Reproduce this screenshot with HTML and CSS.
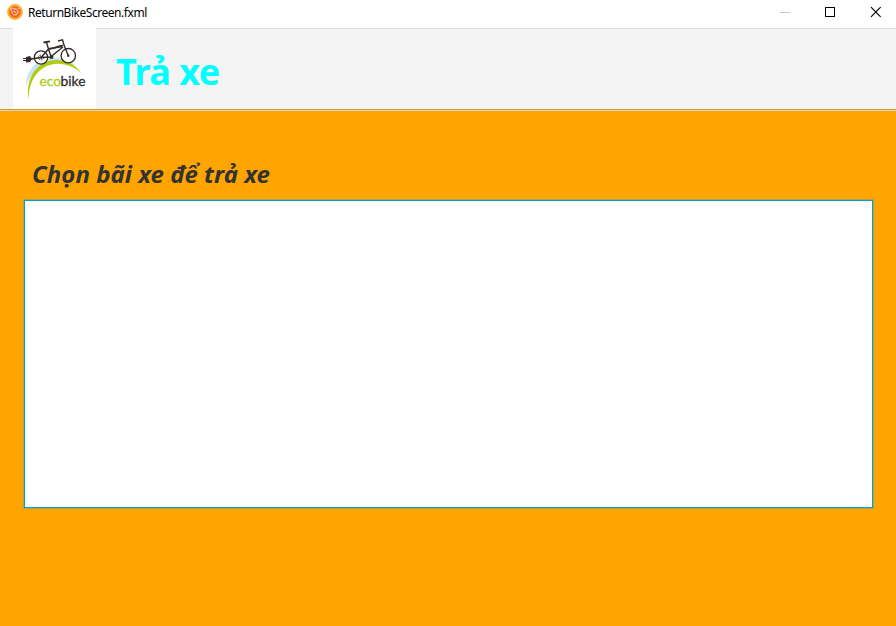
FILE: index.html
```html
<!DOCTYPE html>
<html lang="vi">
<head>
<meta charset="utf-8">
<title>ReturnBikeScreen.fxml</title>
<link rel="stylesheet" href="styles.css">
</head>
<body>
<div class="window">
  <div class="titlebar">
    <svg class="app-icon" width="16" height="16" viewBox="0 0 16 16">
      <circle cx="8" cy="8" r="7.900" fill="#fbb02d"/>
      <circle cx="8" cy="8" r="5.800" fill="#f4641e"/>
      <g fill="none" stroke="#ffe0c4" stroke-width="1"><path d="M3.500 4.500C5 3.500 6 5 8 5C10.500 5 11 6.500 11 8C11 10 9.500 11 8 11C6 11 5 9.500 5 8C5 6.500 4 6 3.500 4.500Z"/><path d="M6.500 7L9.500 9M11 4.500l1.500-.5"/></g>
    </svg>
    <span class="caption">ReturnBikeScreen.fxml</span>
    <div class="controls">
      <svg width="45" height="28" viewBox="0 0 45 28" shape-rendering="crispEdges"><path d="M19 12.500h10" stroke="#c6c6c6"/></svg>
      <svg width="45" height="28" viewBox="0 0 45 28" shape-rendering="crispEdges"><rect x="19.500" y="7.500" width="9" height="9" fill="none" stroke="#000"/></svg>
      <svg width="45" height="28" viewBox="0 0 45 28"><path d="M20 7.200l9.600 9.600M29.600 7.200L20 16.800" stroke="#000" stroke-width="1.150"/></svg>
    </div>
  </div>
  <header class="header">
    <svg class="logo" width="83" height="81" viewBox="13 28 83 81">
      <path d="M26.500 86C25 73 35 58.500 52 57.500C63 57 71 61 76 66C68 62 61 61 54 62C39 64 29 76 26.500 86Z" fill="#c8e5f3"/>
      <path d="M28.500 100C25 77 38 60.300 56 60C67 60 76 65 81.500 73.500C75 67 66 63.500 57 63.700C40 64.500 28.500 79 28.500 100Z" fill="#b2cc13"/>
      <circle cx="41" cy="57.500" r="6.500" fill="#fff"/>
      <circle cx="68.300" cy="55.700" r="7" fill="#fff"/>
      <g fill="none" stroke="#352c2a">
        <circle cx="41" cy="57.500" r="6.700" stroke-width="1.300"/>
        <circle cx="68.300" cy="55.700" r="7.200" stroke-width="1.300"/>
        <circle cx="41" cy="57.500" r="2.500" stroke-width="1" stroke-dasharray="1.500 1"/>
        <path d="M31 59L41 57.500L48.500 49L62 46.500M48.500 49L46.500 42.500M48.500 49L51 56.500L63 47M41 57.500L51 57M58 41L62.500 39.800L64 45L68.300 55.700" stroke-width="1.400"/>
        <path d="M49 48.500C54 49.500 57 45.500 63 45.500" stroke-width="1.700"/>
        <path d="M43.500 42.500L50 41.300" stroke-width="1.800"/>
      </g>
      <path d="M26 57l4-1 2 3-2 3-4 .5v-1.500h-3v-1h3v-1h-3v-1h3z" fill="#352c2a"/>
      <circle cx="41" cy="57.500" r="1.200" fill="#352c2a"/>
      <circle cx="51.500" cy="57" r="2" fill="#352c2a"/>
      <circle cx="68.300" cy="55.700" r="1.200" fill="#352c2a"/>
      <text class="logo-text eco" x="39.500" y="86" textLength="21.500" lengthAdjust="spacingAndGlyphs">eco</text>
      <text class="logo-text bike" x="60.500" y="86" textLength="25" lengthAdjust="spacingAndGlyphs">bike</text>
    </svg>
    <h1 class="title">Trả xe</h1>
  </header>
  <main class="content">
    <h2 class="prompt">Chọn bãi xe để trả xe</h2>
    <div class="list"></div>
  </main>
</div>
</body>
</html>
```

FILE: styles.css
```css
* { box-sizing: border-box; }
body { margin: 0; background: #ffa500; font-family: "Noto Sans", "Open Sans", sans-serif; }
.window { display: flex; flex-direction: column; width: 896px; height: 626px; overflow: hidden; }
.titlebar { display: flex; flex: none; height: 28px; padding-left: 7px; background: #fff; }
.app-icon { margin: 4px 5px 0 0; }
.caption { color: #000; font-size: 12px; line-height: 26px; letter-spacing: -0.46px; }
.controls { display: flex; margin-left: auto; }
.header { display: flex; flex: none; height: 83px; padding-left: 13px; background: #f4f4f4; border-bottom: 1px solid #d9d5cd; box-shadow: inset 0 1px #dcdcdc, inset 0 -1px #d39a34; }
.logo { flex: none; background: #fff; }
.logo-text { font-family: Lato, sans-serif; font-size: 13px; font-weight: 400; stroke-width: 0.3px; }
.eco { fill: #b2cc13; stroke: #b2cc13; }
.bike { fill: #352c2a; stroke: #352c2a; }
.title { margin: 0 0 0 20px; color: #0ff; font-size: 36px; font-weight: 700; line-height: 88px; letter-spacing: -0.5px; }
.content { flex: 1; padding: 45px 23px 0 24px; background: #ffa500; }
.prompt { margin: 0 0 8px 8px; color: #333; font-size: 24px; font-style: italic; font-weight: 700; line-height: 36px; letter-spacing: 0.02px; }
.list { height: 308px; background: #fff; border: 1px solid #039ed3; box-shadow: 0 0 1px 1px #b8a340; }
```
